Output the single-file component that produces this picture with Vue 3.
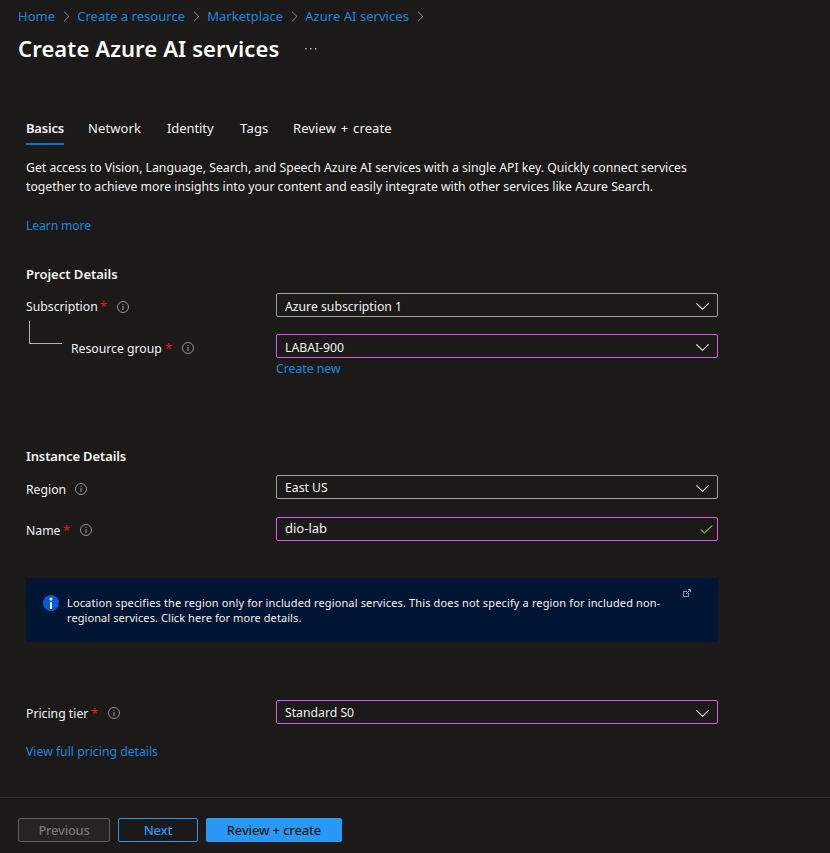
<script setup>
import { h } from 'vue'

const crumbs = ['Home', 'Create a resource', 'Marketplace', 'Azure AI services']
const tabs = ['Basics', 'Network', 'Identity', 'Tags', 'Review + create']

const InfoIcon = () =>
  h('svg', { class: 'info-icon', width: 12, height: 12, viewBox: '0 0 12 12', fill: 'none' }, [
    h('circle', { cx: 6, cy: 6, r: 5.5, stroke: '#96948f' }),
    h('path', { d: 'M6 5v4M6 3v1.1', stroke: '#96948f', 'stroke-width': 1.1 }),
  ])

const Chevron = () =>
  h('svg', { class: 'chevron', width: 13, height: 7, viewBox: '0 0 13 7', fill: 'none' }, [
    h('path', { d: 'M.4.4 6.5 6.3 12.6.4', stroke: '#eceae8', 'stroke-width': 1.15 }),
  ])
</script>

<template>
  <div class="page">
    <nav class="crumbs">
      <template v-for="c in crumbs" :key="c">
        <a class="crumb">{{ c }}</a>
        <svg class="sep" width="7" height="11" viewBox="0 0 7 11" fill="none">
          <path d="M1 .7 5.9 5.5 1 10.3" stroke="#8c8a87" />
        </svg>
      </template>
    </nav>
    <header class="title-row">
      <h1>Create Azure AI services</h1>
      <svg width="12" height="2" viewBox="0 0 12 2"><path d="M0 0h1.5v1.5H0zM5 0h1.5v1.5H5zM10 0h1.5v1.5H10z" fill="#b5b3b0" /></svg>
    </header>

    <main>
      <div class="tabs">
        <span v-for="(t, i) in tabs" :key="t" :class="['tab', 't' + i, { active: i === 0 }]">{{ t }}</span>
      </div>
      <p class="intro narrow">
        Get access to Vision, Language, Search, and Speech Azure AI services with a single API key. Quickly connect services<br />
        together to achieve more insights into your content and easily integrate with other services like Azure Search.
      </p>
      <a class="learn narrow">Learn more</a>

      <h2 class="project">Project Details</h2>
      <div class="field subscription">
        <label><span class="name narrow">Subscription</span><b>*</b><InfoIcon /></label>
        <div class="box"><span class="narrow">Azure subscription 1</span><Chevron /></div>
      </div>
      <div class="field group">
        <i class="elbow"></i>
        <label><span class="name narrow">Resource group</span><b>*</b><InfoIcon /></label>
        <div class="box changed"><span class="narrow">LABAI-900</span><Chevron /></div>
      </div>
      <a class="new narrow">Create new</a>

      <h2 class="instance">Instance Details</h2>
      <div class="field region">
        <label><span class="name narrow">Region</span><InfoIcon /></label>
        <div class="box"><span class="narrow">East US</span><Chevron /></div>
      </div>
      <div class="field named">
        <label><span class="name narrow">Name</span><b>*</b><InfoIcon /></label>
        <div class="box changed">
          <span>dio-lab</span>
          <svg class="check" width="13" height="9" viewBox="0 0 13 9" fill="none"><path d="M.7 4.5 4.3 8 12.3.6" stroke="#83b341" stroke-width="1.2" /></svg>
        </div>
      </div>

      <div class="notice">
        <svg class="badge" width="16" height="16" viewBox="0 0 16 16">
          <circle cx="8" cy="8" r="8" fill="#015cda" />
          <path d="M7 7h2v7H7z" fill="#fff" /><circle cx="8" cy="4" r="1.5" fill="#fff" />
        </svg>
        <p>
          Location specifies the region only for included regional services. This does not specify a region for included non-<br />
          <span class="second">regional services. Click here for more details.</span>
        </p>
        <svg class="external" width="8" height="8" viewBox="0 0 8 8" fill="none" stroke="#929bab">
          <path d="M4 2.5H.5v5h5V4M5 .5h2.5V3M7.3.7 3.2 4.8" />
        </svg>
      </div>

      <div class="field pricing">
        <label><span class="name narrow">Pricing tier</span><b>*</b><InfoIcon /></label>
        <div class="box changed"><span class="narrow">Standard S0</span><Chevron /></div>
      </div>
      <a class="details narrow">View full pricing details</a>
    </main>

    <footer>
      <button class="prev" disabled>Previous</button>
      <button class="next">Next</button>
      <button class="review">Review + create</button>
    </footer>
  </div>
</template>

<style>
body { background: #1b1a19; }
</style>

<style scoped>
.page {
  width: 830px; height: 853px; box-sizing: border-box; overflow: hidden;
  display: flex; flex-direction: column;
  background: #1b1a19; color: #f3f2f1;
  font: 13px/19px "Noto Sans", sans-serif;
}
a { color: #1d86df; white-space: nowrap; }
.narrow { transform: scaleX(.94); transform-origin: 0 50%; }
.crumbs { display: flex; align-items: center; height: 32px; padding-left: 18px; }
.crumb { font-size: 13px; letter-spacing: .04px; }
.sep { margin: 0 7px 0 8px; }
.title-row { display: flex; align-items: center; height: 34px; padding-left: 18px; gap: 26px; }
h1 { margin: -2px 0 0; font-size: 22px; font-weight: 600; line-height: 34px; letter-spacing: .12px; color: #fff; white-space: nowrap; }
main { display: flex; flex-direction: column; padding: 50px 112px 0 26px; height: 731px; box-sizing: border-box; }
main > * { flex-shrink: 0; }
.tabs { display: flex; gap: 24px; height: 29px; }
.tab { height: 27px; line-height: 25px; white-space: nowrap; }
.tab.active { width: 38px; font-weight: 600; letter-spacing: -.2px; border-bottom: 2px solid #0078d4; }
.t1 { width: 55px; letter-spacing: .12px; }
.t2 { width: 49px; letter-spacing: -.08px; }
.t3 { width: 29px; letter-spacing: .2px; }
.t4 { letter-spacing: .1px; word-spacing: 1.3px; }
.intro { margin: 13px 0 0; height: 38px; white-space: nowrap; }
.learn { margin-top: 20px; height: 19px; letter-spacing: -.15px; }
h2 { margin: 0; font-size: 13px; font-weight: 600; line-height: 19px; height: 19px; }
.project { margin-top: 30px; }
.field { display: flex; height: 24px; position: relative; }
label { display: flex; width: 250px; box-sizing: border-box; line-height: 27px; white-space: nowrap; }
.name { flex: none; }
label b { color: #e01b24; font-weight: 400; margin-left: 2px; width: 8px; }
.info-icon { margin: 8px 0 0 9px; }
.box {
  display: flex; justify-content: space-between; box-sizing: border-box;
  width: 442px; height: 24px; padding: 0 8px; border: 1px solid #a19f9d; border-radius: 2px; line-height: 24px;
}
.box.changed { border-color: #d559f0; }
.chevron { margin-top: 9px; }
.check { margin: 7px -4px 0 0; }
.subscription { margin-top: 9px; }
.subscription .name { width: 72px; }
.group { margin-top: 17px; }
.group label { padding-left: 45px; line-height: 28px; }
.group .name { width: 91px; }
.group b { margin-left: 3px; }
.elbow { position: absolute; left: 3px; top: -13px; width: 32px; height: 22px; border: solid #b5b3b0; border-width: 0 0 1px 1px; }
.new { margin: 1px 0 0 250px; height: 19px; }
.instance { margin-top: 69px; letter-spacing: -.12px; }
.region { margin-top: 9px; }
.region label { line-height: 28px; }
.region .name { width: 40px; }
.region .box, .pricing .box { line-height: 23px; }
.named { margin-top: 18px; }
.named .name { width: 35px; }
.named .box { line-height: 21px; }
.named .info-icon, .pricing .info-icon { margin-top: 7px; }
.notice { display: flex; width: 692px; height: 64px; margin-top: 37px; background: #001433; position: relative; }
.badge { margin: 17px 8px 0 17px; }
.notice p { margin: 17px 0 0; font-size: 11px; line-height: 15px; letter-spacing: .138px; white-space: nowrap; }
.second { letter-spacing: .08px; }
.external { position: absolute; left: 657px; top: 11px; }
.pricing { margin-top: 58px; }
.pricing .name { width: 63px; }
.details { margin-top: 18px; height: 19px; }
footer { display: flex; gap: 8px; height: 56px; box-sizing: border-box; border-top: 1px solid #323130; padding: 20px 18px 0; }
button { height: 24px; box-sizing: border-box; padding: 0; border: 1px solid #2899f5; border-radius: 2px; background: transparent; color: #2899f5; font: 500 13px/22px "Noto Sans", sans-serif; letter-spacing: -.15px; white-space: nowrap; }
.prev { width: 92px; border-color: #605e5c; background: #252423; color: #797775; letter-spacing: -.25px; }
.next { width: 80px; }
.review { width: 136px; background: #2899f5; color: #1b1a19; }
</style>
